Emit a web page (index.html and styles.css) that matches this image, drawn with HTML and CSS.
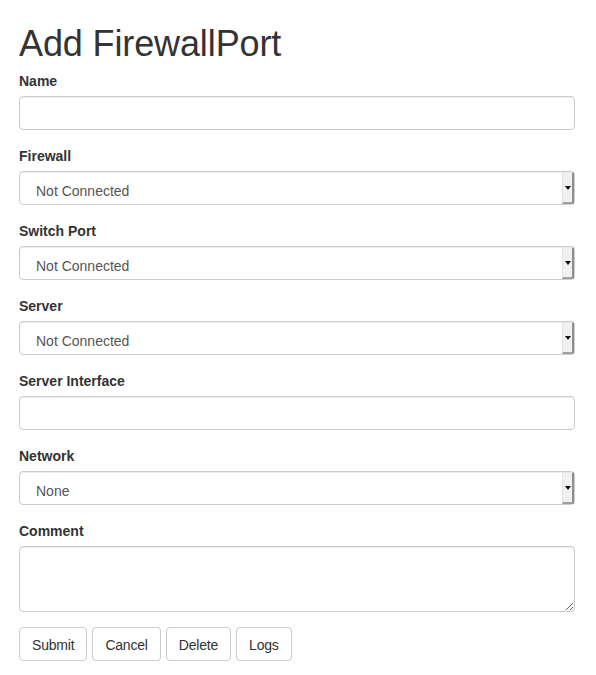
FILE: index.html
```html
<!DOCTYPE html>
<html>
<head>
<meta charset="utf-8">
<link rel="stylesheet" href="styles.css">
</head>
<body>
<div class="page">
  <h1 class="title">Add FirewallPort</h1>
  <form class="form">
    <div class="group">
      <label class="label">Name</label>
      <input class="control" type="text">
    </div>
    <div class="group">
      <label class="label">Firewall</label>
      <div class="select-wrap">
        <select class="control select"><option>Not Connected</option></select>
        <span class="select-btn"><span class="arrow"></span></span>
      </div>
    </div>
    <div class="group">
      <label class="label">Switch Port</label>
      <div class="select-wrap">
        <select class="control select"><option>Not Connected</option></select>
        <span class="select-btn"><span class="arrow"></span></span>
      </div>
    </div>
    <div class="group">
      <label class="label">Server</label>
      <div class="select-wrap">
        <select class="control select"><option>Not Connected</option></select>
        <span class="select-btn"><span class="arrow"></span></span>
      </div>
    </div>
    <div class="group">
      <label class="label">Server Interface</label>
      <input class="control" type="text">
    </div>
    <div class="group">
      <label class="label">Network</label>
      <div class="select-wrap">
        <select class="control select"><option>None</option></select>
        <span class="select-btn"><span class="arrow"></span></span>
      </div>
    </div>
    <div class="group group-last">
      <label class="label">Comment</label>
      <textarea class="control area"></textarea>
    </div>
    <div class="buttons">
      <button type="button" class="btn">Submit</button>
      <button type="button" class="btn">Cancel</button>
      <button type="button" class="btn">Delete</button>
      <button type="button" class="btn">Logs</button>
    </div>
  </form>
</div>
</body>
</html>
```
FILE: styles.css
```css
* { box-sizing: border-box; }
html, body {
  margin: 0;
  padding: 0;
  background: #fff;
}
body {
  font-family: "Liberation Sans", Arial, sans-serif;
  font-size: 14px;
  line-height: 20px;
  color: #333;
}
.page {
  padding: 0 21px 0 19px;
}
.title {
  margin: 24px 0 7px;
  font-size: 36px;
  line-height: 40px;
  font-weight: 500;
  letter-spacing: -0.12px;
  color: #333;
}
.form { margin: 0; }
.group {
  margin-bottom: 16px;
}
.group-last { margin-bottom: 15px; }
.label {
  display: block;
  font-weight: bold;
  margin-bottom: 5px;
  height: 20px;
}
.control {
  display: block;
  width: 100%;
  height: 34px;
  padding: 6px 12px;
  font-family: "Liberation Sans", Arial, sans-serif;
  font-size: 14px;
  line-height: 20px;
  color: #555;
  background: #fff;
  border: 1px solid #ccc;
  border-radius: 4px;
  box-shadow: inset 0 1px 1px rgba(0,0,0,0.075);
  margin: 0;
}
.select-wrap {
  position: relative;
}
.select {
  -webkit-appearance: none;
  appearance: none;
  padding: 9px 16px 3px 16px;
}
.select-btn {
  position: absolute;
  top: 1px;
  right: 1px;
  width: 12px;
  height: 32px;
  background: #f1f1f1;
  border-left: 1px solid #e3e3e3;
  border-right: 2px solid #8f8f8f;
  border-bottom: 2px solid #a0a0a0;
  border-top: 1px solid #e8e8e8;
  display: flex;
  align-items: center;
  justify-content: center;
}
.arrow {
  width: 0;
  height: 0;
  border-left: 3px solid transparent;
  border-right: 3px solid transparent;
  border-top: 4px solid #111;
  margin-top: 1px;
}
.area {
  height: 66px;
  resize: vertical;
}
.buttons {
  display: flex;
  gap: 5px;
}
.btn {
  height: 34px;
  padding: 7px 12px 5px;
  font-family: "Liberation Sans", Arial, sans-serif;
  font-size: 14px;
  line-height: 20px;
  letter-spacing: -0.2px;
  color: #333;
  background: #fff;
  border: 1px solid #ccc;
  border-radius: 4px;
  margin: 0;
}
```
